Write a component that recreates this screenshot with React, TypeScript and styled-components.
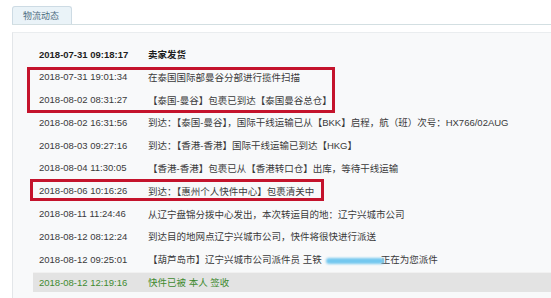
import React from 'react';
import styled, { createGlobalStyle } from 'styled-components';

const GlobalStyle = createGlobalStyle`
  html, body {
    margin: 0;
    padding: 0;
    background: #ffffff;
  }
  body {
    font-family: 'Liberation Sans', 'Noto Sans CJK SC', sans-serif;
    overflow: hidden;
  }
`;

const Page = styled.div`
  width: 551px;
  height: 298px;
  padding: 6px 0 0 12px;
  box-sizing: border-box;
  overflow: hidden;
`;

const TabBar = styled.div`
  display: flex;
  border-bottom: 1px solid #d3dfe2;
`;

const Tab = styled.div`
  width: 60px;
  height: 18px;
  box-sizing: border-box;
  border: 1px solid #cddbe4;
  border-bottom: none;
  border-radius: 3px 3px 0 0;
  background: #eaf3f8;
  color: #4e6c80;
  font-size: 9px;
  line-height: 18px;
  padding-left: 10px;
  font-family: 'Noto Sans CJK SC', sans-serif;
`;

const Panel = styled.div`
  margin-top: 7px;
  border-top: 1px solid #eaedef;
  border-left: 1px solid #e3e6e9;
  background: #f8f9fa;
  padding: 11px 0 6px 20px;
`;

const List = styled.div`
  display: flex;
  flex-direction: column;
  gap: 2.8px;
`;

const Marked = styled.div<{ $inset: string }>`
  position: relative;
  display: flex;
  flex-direction: column;
  gap: 2.8px;
  width: max-content;

  &::after {
    content: '';
    position: absolute;
    inset: ${(p) => p.$inset};
    border: 3px solid #c4132c;
    pointer-events: none;
  }
`;

type Tone = 'plain' | 'bold' | 'done';

const Row = styled.div<{ $tone?: Tone }>`
  display: flex;
  align-items: center;
  height: 20px;
  padding-left: 6px;
  font-size: 9.5px;
  white-space: nowrap;
  color: ${(p) => (p.$tone === 'bold' ? '#1e1e1e' : p.$tone === 'done' ? '#3f8a2f' : '#3a3a3a')};
  font-weight: ${(p) => (p.$tone === 'bold' ? 700 : 400)};
  background: ${(p) => (p.$tone === 'done' ? '#e3e3e3' : 'transparent')};
  border-top: ${(p) => (p.$tone === 'done' ? '1px solid #f1f1f1' : 'none')};
  box-sizing: border-box;
`;

const When = styled.span`
  width: 109px;
  flex-shrink: 0;
`;

const What = styled.span`
  padding-right: 2px;
`;

const Smudge = styled.span`
  position: relative;
  z-index: 1;
  display: inline-block;
  width: 58px;
  height: 6px;
  margin: 0 -3px 0 4px;
  border-radius: 3px;
  background: #74c8ef;
  filter: blur(1.2px);
  vertical-align: middle;
`;

type Entry = { time: string; text: React.ReactNode; tone?: Tone };

const entries: Entry[] = [
  { time: '2018-07-31 09:18:17', text: '卖家发货', tone: 'bold' },
  { time: '2018-07-31 19:01:34', text: '在泰国国际部曼谷分部进行揽件扫描' },
  { time: '2018-08-02 08:31:27', text: '【泰国-曼谷】包裹已到达【泰国曼谷总仓】' },
  { time: '2018-08-02 16:31:56', text: '到达：【泰国-曼谷】，国际干线运输已从【BKK】启程，航（班）次号：HX766/02AUG' },
  { time: '2018-08-03 09:27:16', text: '到达：【香港-香港】国际干线运输已到达【HKG】' },
  { time: '2018-08-04 11:30:05', text: '【香港-香港】包裹已从【香港转口仓】出库，等待干线运输' },
  { time: '2018-08-06 10:16:26', text: '到达：【惠州个人快件中心】包裹清关中' },
  { time: '2018-08-11 11:24:46', text: '从辽宁盘锦分拨中心发出，本次转运目的地：辽宁兴城市公司' },
  { time: '2018-08-12 08:12:24', text: '到达目的地网点辽宁兴城市公司，快件将很快进行派送' },
  {
    time: '2018-08-12 09:25:01',
    text: (
      <>
        【葫芦岛市】辽宁兴城市公司派件员 王铁
        <Smudge />
        正在为您派件
      </>
    ),
  },
  { time: '2018-08-12 12:19:16', text: '快件已被 本人 签收', tone: 'done' },
];

const renderRow = (e: Entry) => (
  <Row key={e.time} $tone={e.tone}>
    <When>{e.time}</When>
    <What>{e.text}</What>
  </Row>
);

export default function App() {
  return (
    <>
      <GlobalStyle />
      <Page>
        <TabBar>
          <Tab>物流动态</Tab>
        </TabBar>
        <Panel>
          <List>
            {renderRow(entries[0])}
            <Marked $inset="0 -1px -3px -6px">{entries.slice(1, 3).map(renderRow)}</Marked>
            {entries.slice(3, 6).map(renderRow)}
            <Marked $inset="-2px -8px 0 -3px">{renderRow(entries[6])}</Marked>
            {entries.slice(7).map(renderRow)}
          </List>
        </Panel>
      </Page>
    </>
  );
}
